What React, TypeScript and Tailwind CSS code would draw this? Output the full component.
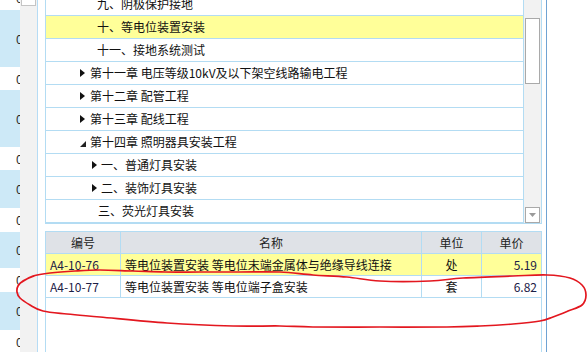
import React from "react";

const FONT = { fontFamily: '"Noto Sans CJK SC", "Noto Sans", sans-serif' };

const leftCells: { h: number; blue: boolean; first?: boolean }[] = [
  { h: 10, blue: false, first: true },
  { h: 57, blue: true },
  { h: 23, blue: false },
  { h: 57, blue: true },
  { h: 23, blue: false },
  { h: 38, blue: true },
  { h: 24, blue: false },
  { h: 36, blue: true },
  { h: 24, blue: false },
  { h: 38, blue: true },
  { h: 24, blue: false },
];

type Row = { text: string; indent: number; arrow?: "r" | "d"; aw?: number; hl?: boolean };

const rows: Row[] = [
  { text: "九、阴极保护接地", indent: 51 },
  { text: "十、等电位装置安装", indent: 51, hl: true },
  { text: "十一、接地系统测试", indent: 51 },
  { text: "第十一章 电压等级10kV及以下架空线路输电工程", indent: 34, arrow: "r", aw: 10 },
  { text: "第十二章 配管工程", indent: 34, arrow: "r", aw: 10 },
  { text: "第十三章 配线工程", indent: 34, arrow: "r", aw: 10 },
  { text: "第十四章 照明器具安装工程", indent: 34, arrow: "d", aw: 10 },
  { text: "一、普通灯具安装", indent: 46, arrow: "r", aw: 9 },
  { text: "二、装饰灯具安装", indent: 46, arrow: "r", aw: 9 },
  { text: "三、荧光灯具安装", indent: 52 },
];

const pts: [number, number][] = [
  [22, 282], [33, 276], [50, 273], [75, 271], [100, 270], [133, 271], [165, 272], [200, 272],
  [240, 272], [280, 272], [313, 275], [347, 277], [380, 281], [430, 281], [463, 278], [513, 276],
  [547, 275], [570, 278], [582, 285], [586, 295], [582, 305], [568, 311], [553, 317], [540, 321],
  [513, 324], [480, 326], [447, 327], [380, 327], [313, 327], [280, 326], [233, 326], [167, 323],
  [100, 317], [67, 314], [43, 311], [30, 305], [20, 298], [17, 292], [18, 286], [23, 281], [34, 276],
];

function smoothPath(p: [number, number][]) {
  let d = `M ${p[0][0]} ${p[0][1]}`;
  for (let i = 0; i < p.length - 1; i++) {
    const p0 = p[i - 1] || p[i];
    const p1 = p[i];
    const p2 = p[i + 1];
    const p3 = p[i + 2] || p2;
    const c1x = p1[0] + (p2[0] - p0[0]) / 6;
    const c1y = p1[1] + (p2[1] - p0[1]) / 6;
    const c2x = p2[0] - (p3[0] - p1[0]) / 6;
    const c2y = p2[1] - (p3[1] - p1[1]) / 6;
    d += ` C ${c1x.toFixed(1)} ${c1y.toFixed(1)}, ${c2x.toFixed(1)} ${c2y.toFixed(1)}, ${p2[0]} ${p2[1]}`;
  }
  return d;
}

function Arrow({ dir, w }: { dir: "r" | "d"; w: number }) {
  return (
    <div className="flex items-center shrink-0" style={{ width: w }}>
      {dir === "r" ? (
        <svg width="5" height="8" viewBox="0 0 5 8">
          <polygon points="0,0 5,4 0,8" fill="#111" />
        </svg>
      ) : (
        <svg width="6" height="6" viewBox="0 0 6 6" className="translate-y-[2px]">
          <polygon points="6,0 6,6 0,6" fill="#222" />
        </svg>
      )}
    </div>
  );
}

export default function App() {
  return (
    <div
      className="relative w-[588px] h-[352px] overflow-hidden bg-white flex text-[12px] text-[#111]"
      style={FONT}
    >
      {/* left cells */}
      <div className="w-[20px] shrink-0 overflow-hidden flex flex-col">
        {leftCells.map((c, i) => (
          <div
            key={i}
            className={`shrink-0 overflow-hidden ${c.blue ? "bg-[#cde9f7]" : "bg-white"}`}
            style={{ height: c.h }}
          >
            {c.first ? (
              <div className="h-[24px] -mt-[14px] flex items-center pl-[16px] text-[#2a2a2a]">0</div>
            ) : (
              <div className="h-full flex items-center pl-[16px] text-[#2a2a2a]">0</div>
            )}
          </div>
        ))}
      </div>

      {/* left scrollbar strip */}
      <div className="w-[18px] shrink-0 bg-[#f2f2f2] border-r border-[#b6dcf5] flex flex-col">
        <div className="ml-[1px] w-[15px] h-[6px] bg-white border-x border-b border-[#c4c4c4]" />
      </div>

      <div className="w-[7px] shrink-0" />

      {/* main column */}
      <div className="w-[497px] shrink-0 flex flex-col -mt-[7px]">
        {/* tree panel */}
        <div className="flex border-x border-b border-[#b3dcf3]">
          <div className="w-[477px] flex flex-col">
            {rows.map((r, i) => (
              <div
                key={i}
                className={`h-[23px] border-b border-[#b3dcf3] flex items-center whitespace-nowrap ${
                  r.hl ? "bg-[#ffff99]" : "bg-white"
                }`}
                style={{ paddingLeft: r.indent }}
              >
                {r.arrow && <Arrow dir={r.arrow} w={r.aw || 10} />}
                <span>{r.text}</span>
              </div>
            ))}
          </div>
          <div className="w-[18px] border-l border-[#b3dcf3] bg-[#f2f2f2] flex flex-col items-center">
            <div className="mt-[25px] w-[15px] h-[66px] bg-white border border-[#a9a9a9]" />
            <div className="flex-1" />
            <div className="w-[15px] h-[16px] bg-white border border-[#a9a9a9] flex items-center justify-center">
              <svg width="7" height="4" viewBox="0 0 7 4">
                <polygon points="0,0 7,0 3.5,4" fill="#9a9a9a" />
              </svg>
            </div>
          </div>
        </div>

        {/* table */}
        <div className="mt-[7px] flex-1 border-x border-[#b3dcf3] flex flex-col">
          <div className="h-[23px] flex bg-[#dfe2e7] border-y border-[#b3dcf3] text-[#222]">
            <div className="w-[75px] border-r border-[#b3dcf3] flex items-center justify-center">编号</div>
            <div className="w-[301px] border-r border-[#b3dcf3] flex items-center justify-center">名称</div>
            <div className="w-[60px] border-r border-[#b3dcf3] flex items-center justify-center">单位</div>
            <div className="flex-1 flex items-center justify-center">单价</div>
          </div>
          {[
            { code: "A4-10-76", name: "等电位装置安装 等电位末端金属体与绝缘导线连接", unit: "处", price: "5.19", hl: true },
            { code: "A4-10-77", name: "等电位装置安装 等电位端子盒安装", unit: "套", price: "6.82", hl: false },
          ].map((r, i) => (
            <div
              key={i}
              className={`h-[22px] flex border-b border-[#b3dcf3] whitespace-nowrap ${
                r.hl ? "bg-[#ffff99]" : "bg-white"
              }`}
            >
              <div className="w-[75px] border-r border-[#b3dcf3] flex items-center pl-[4px] text-[#1c2046]">
                {r.code}
              </div>
              <div className="w-[301px] border-r border-[#b3dcf3] flex items-center pl-[4px]">{r.name}</div>
              <div className="w-[60px] border-r border-[#b3dcf3] flex items-center justify-center">{r.unit}</div>
              <div className="flex-1 flex items-center justify-end pr-[4px] text-[#1c2046]">{r.price}</div>
            </div>
          ))}
        </div>
      </div>

      <div className="w-[4px] shrink-0" />
      <div className="w-[1px] shrink-0 bg-[#6fa3d3]" />
      <div className="flex-1" />

      {/* red hand-drawn ellipse */}
      <svg className="absolute inset-0 pointer-events-none" width="588" height="352" viewBox="0 0 588 352">
        <path d={smoothPath(pts)} fill="none" stroke="#e3171f" strokeWidth="1.7" strokeLinecap="round" strokeLinejoin="round" />
      </svg>
    </div>
  );
}
